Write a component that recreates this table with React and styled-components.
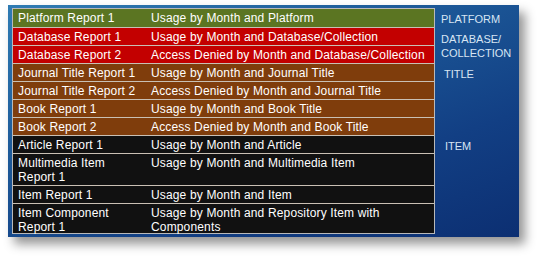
import React from "react";
import styled, { createGlobalStyle } from "styled-components";

const Global = createGlobalStyle`
  html, body { margin: 0; padding: 0; background: #ffffff; }
  body { font-family: "Liberation Sans", Arial, sans-serif; }
`;

const Page = styled.div`
  width: 545px;
  height: 256px;
  padding: 5px 0 0 8px;
  box-sizing: border-box;
`;

const Slide = styled.div`
  width: 511px;
  height: 232px;
  box-sizing: border-box;
  padding: 3px 0 0 4px;
  display: flex;
  background: linear-gradient(160deg, #2f7bb3 0%, #1d5a99 35%, #123f84 70%, #0c2f72 100%);
  box-shadow: 6px 7px 10px rgba(0, 0, 0, 0.42);
`;

const Table = styled.div`
  width: 423px;
  border: 1px solid #b9b9b9;
  box-sizing: border-box;
  align-self: flex-start;
`;

const palette = {
  green: "#5b7522",
  red: "#c30000",
  brown: "#7f3d0c",
  black: "#111111",
};

const Row = styled.div`
  display: grid;
  grid-template-columns: 133px 1fr;
  height: ${(p) => (p.$tall ? p.$tall : 18)}px;
  background: ${(p) => palette[p.$tone]};
  border-top: ${(p) => (p.$first ? "none" : "1px solid #c9c0b4")};
  box-sizing: border-box;
  color: #ffffff;
  font-size: 12px;
  line-height: 14px;
  letter-spacing: 0.15px;
`;

const Cell = styled.div`
  padding: 2px 0 0 5px;
  white-space: pre-line;
`;

const Labels = styled.div`
  flex: 1;
  color: #d7e5f3;
  font-size: 11px;
  line-height: 14px;
  padding-left: 6px;
  display: flex;
  flex-direction: column;
`;

const Label = styled.div`
  margin-top: ${(p) => p.$mt}px;
  padding-left: ${(p) => p.$pl || 0}px;
`;

const rows = [
  ["green", "Platform Report 1", "Usage by Month and Platform"],
  ["red", "Database Report 1", "Usage by Month and Database/Collection"],
  ["red", "Database Report 2", "Access Denied by Month and Database/Collection"],
  ["brown", "Journal Title Report 1", "Usage by Month and Journal Title"],
  ["brown", "Journal Title Report 2", "Access Denied by Month and Journal Title"],
  ["brown", "Book Report 1", "Usage by Month and Book Title"],
  ["brown", "Book Report 2", "Access Denied by Month and Book Title"],
  ["black", "Article Report 1", "Usage by Month and Article"],
  ["black", "Multimedia Item\nReport 1", "Usage by Month and Multimedia Item", 32],
  ["black", "Item Report 1", "Usage by Month and Item"],
  ["black", "Item Component\nReport 1", "Usage by Month and Repository Item with\nComponents", 30],
];

export default function App() {
  return (
    <Page>
      <Global />
      <Slide>
        <Table>
          {rows.map(([tone, a, b, tall], i) => (
            <Row key={i} $tone={tone} $tall={tall} $first={i === 0}>
              <Cell>{a}</Cell>
              <Cell>{b}</Cell>
            </Row>
          ))}
        </Table>
        <Labels>
          <Label $mt={4}>PLATFORM</Label>
          <Label $mt={6}>DATABASE/<br />COLLECTION</Label>
          <Label $mt={7} $pl={3}>TITLE</Label>
          <Label $mt={58} $pl={4}>ITEM</Label>
        </Labels>
      </Slide>
    </Page>
  );
}
